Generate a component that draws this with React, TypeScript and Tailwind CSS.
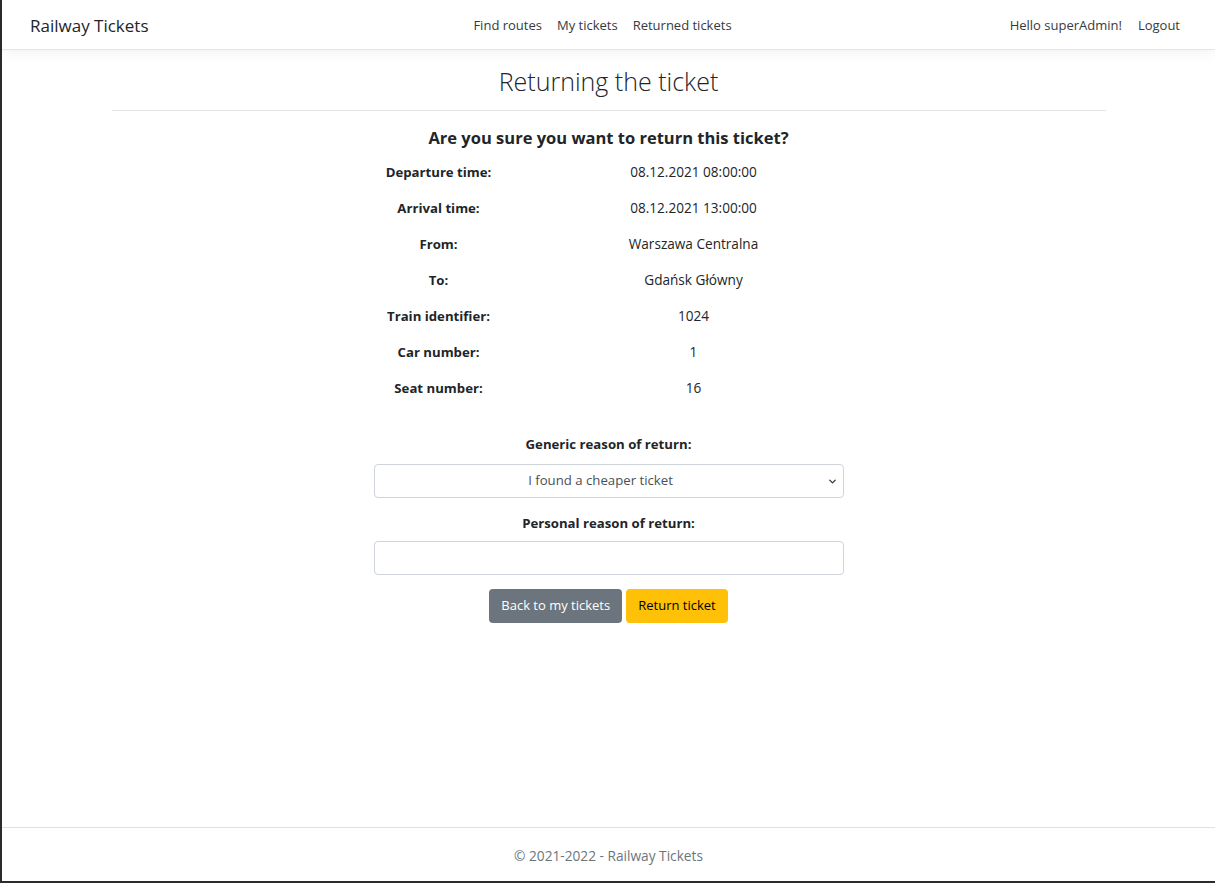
import { ChevronDown } from "lucide-react"

const details = [
  { label: "Departure time:", value: "08.12.2021 08:00:00" },
  { label: "Arrival time:", value: "08.12.2021 13:00:00" },
  { label: "From:", value: "Warszawa Centralna" },
  { label: "To:", value: "Gdańsk Główny" },
  { label: "Train identifier:", value: "1024" },
  { label: "Car number:", value: "1" },
  { label: "Seat number:", value: "16" },
]

const Navbar = () => (
  <nav className="h-[50px] shrink-0 bg-white border-b border-[#e4e4ec] shadow-[0_4px_12px_rgba(0,0,0,0.05)] flex items-center pt-[2px] pl-[28px] pr-[35px] relative">
    <a className="text-[17px] text-[#212529] leading-none">Railway Tickets</a>
    <div className="absolute left-[calc(50%-6px)] -translate-x-1/2 flex gap-[15px] text-[13px] text-[#343a40]">
      <a>Find routes</a>
      <a>My tickets</a>
      <a>Returned tickets</a>
    </div>
    <div className="ml-auto flex gap-[16px] text-[13px] text-[#343a40]">
      <span>Hello superAdmin!</span>
      <a>Logout</a>
    </div>
  </nav>
)

export default function App() {
  return (
    <div className="h-[883px] flex flex-col bg-white border-l-2 border-b-2 border-[#2b2b2b] text-[#212529] font-['Open_Sans',sans-serif]">
      <Navbar />

      <main className="flex-1 flex flex-col items-center">
        {/* Title */}
        <div className="w-[994px] border-b border-[#e5e5e5] text-center pt-[14px] pb-[12px]">
          <h1 className="text-[25px] font-light leading-[34px]">Returning the ticket</h1>
        </div>

        <h2 className="mt-[15px] text-[16.5px] font-bold leading-[24px]">Are you sure you want to return this ticket?</h2>

        {/* Ticket details */}
        <div className="mt-[4px] grid grid-cols-[170px_340px] leading-[20px]">
          {details.map((d) => (
            <div key={d.label} className="contents">
              <div className="font-bold text-center py-[8px] text-[13.2px]">{d.label}</div>
              <div className="text-center py-[8px] text-[13.6px]">{d.value}</div>
            </div>
          ))}
        </div>

        {/* Return form */}
        <div className="w-[470px] mt-[28px] flex flex-col items-center">
          <label className="text-[13.2px] font-bold leading-[20px]">Generic reason of return:</label>
          <div className="relative w-full mt-[10px]">
            <div className="h-[34px] w-full border border-[#ced4da] rounded-[4px] flex items-center justify-center pl-[12px] pr-[28px] text-[13.2px] text-[#495057]">
              I found a cheaper ticket
            </div>
            <ChevronDown className="absolute right-[6px] top-[12px] w-[11px] h-[11px] text-[#343a40]" strokeWidth={3} />
          </div>

          <label className="mt-[15px] text-[13.2px] font-bold leading-[20px]">Personal reason of return:</label>
          <input className="mt-[8px] h-[34px] w-full border border-[#ced4da] rounded-[4px] px-3 text-[13px]" />

          <div className="mt-[14px] flex gap-[4px] text-[13px]">
            <button className="h-[34px] px-[12px] rounded-[4px] bg-[#6c757d] text-white">Back to my tickets</button>
            <button className="h-[34px] px-[12px] rounded-[4px] bg-[#ffc107] text-black">Return ticket</button>
          </div>
        </div>
      </main>

      <footer className="h-[54px] shrink-0 border-t border-[#dee2e6] flex items-center justify-center pt-[3px] text-[13.7px] text-[#6c757d]">
        © 2021-2022 - Railway Tickets
      </footer>
    </div>
  )
}
